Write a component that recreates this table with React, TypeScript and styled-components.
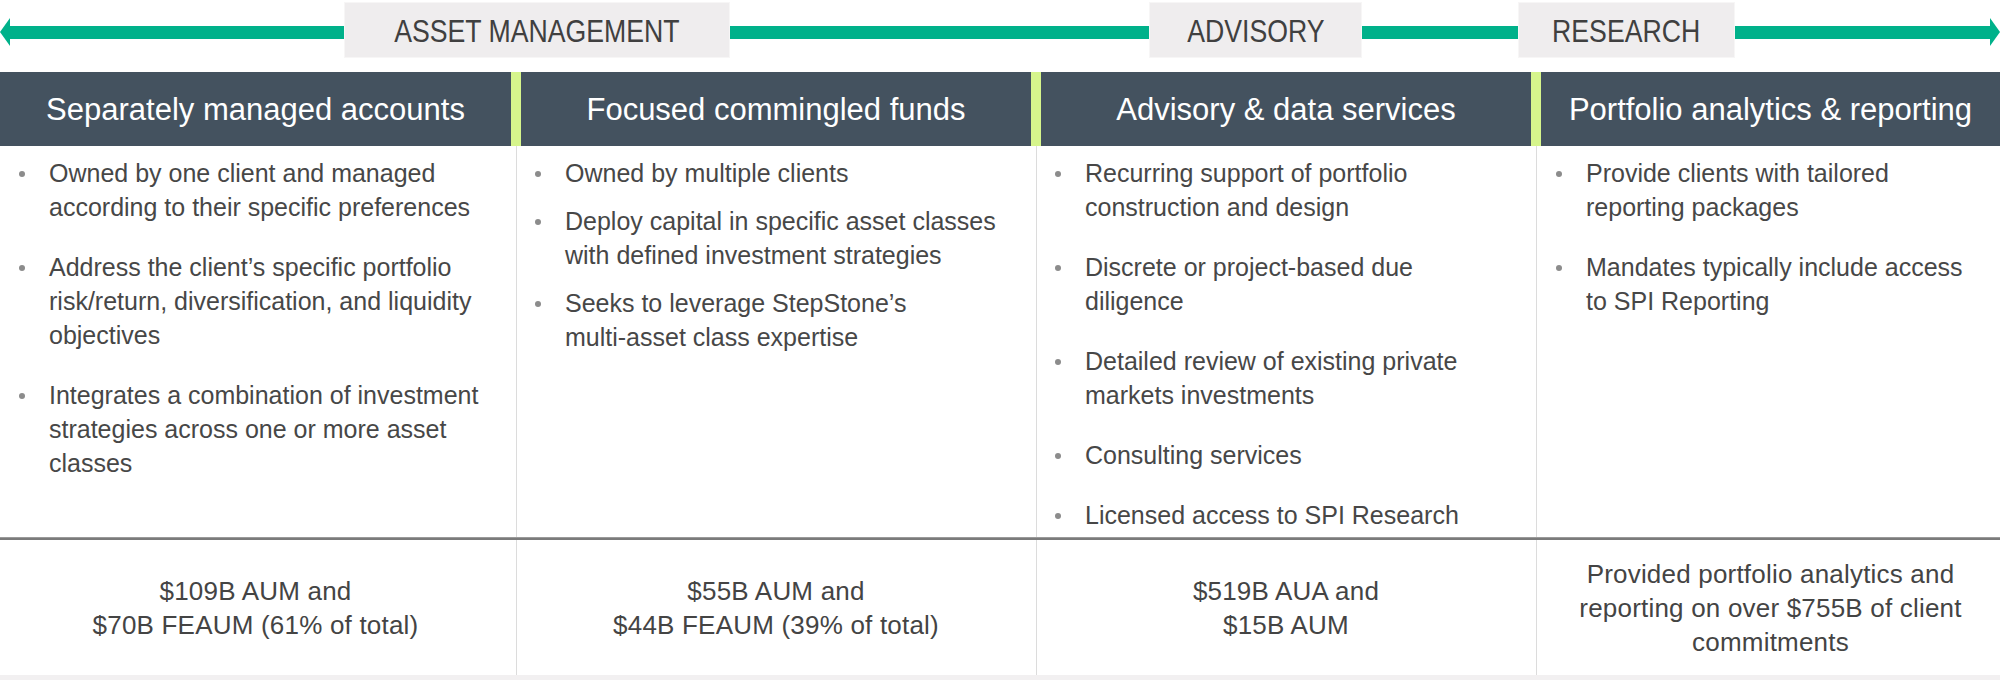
import styled, { createGlobalStyle } from 'styled-components';

const GlobalStyle = createGlobalStyle`
  html, body {
    margin: 0;
    padding: 0;
    background: #ffffff;
  }
  body {
    font-family: 'Liberation Sans', Arial, sans-serif;
    color: #444444;
  }
`;

const GREEN = '#00b18a';
const SLATE = '#44525f';
const LIME = '#d6f58c';

const Page = styled.div`
  width: 2000px;
  height: 680px;
  overflow: hidden;
`;

// top arrow with the three business labels
const ArrowBar = styled.div`
  display: flex;
  align-items: flex-start;
  height: 72px;
`;

const ArrowHead = styled.svg`
  display: block;
  flex: none;
  margin-top: 18px;
`;

const Line = styled.div<{ $w: number }>`
  flex: none;
  width: ${({ $w }) => $w}px;
  height: 13px;
  margin-top: 26px;
  background: ${GREEN};
`;

const Label = styled.div<{ $w: number }>`
  flex: none;
  box-sizing: border-box;
  width: ${({ $w }) => $w}px;
  height: 56px;
  margin-top: 2px;
  padding-top: 3px;
  border: 1px solid #f7f6f6;
  background: #efedee;
  display: flex;
  align-items: center;
  justify-content: center;
  font-size: 31px;
  color: #404040;
`;

// the label face is a condensed grotesque: squeeze the regular one
const LabelText = styled.span`
  display: inline-block;
  white-space: nowrap;
  transform: scaleX(0.86);
`;

const Table = styled.div`
  display: grid;
  grid-template-columns: 511px 10px 510px 10px 490px 10px 459px;
  grid-template-rows: 74px 391px 3px 135px 5px;
`;

const HeaderCell = styled.div`
  background: ${SLATE};
  color: #ffffff;
  font-size: 31px;
  display: flex;
  align-items: center;
  justify-content: center;
  white-space: nowrap;
  padding-top: 1px;
`;

const Separator = styled.div`
  background: ${LIME};
`;

const Divider = styled.div`
  display: flex;
  justify-content: center;
  &::before {
    content: '';
    width: 1px;
    background: #dcdcdc;
  }
`;

const BodyCell = styled.ul<{ $pad: number; $gap: number }>`
  list-style: none;
  margin: 0;
  padding: 10px 0 0 ${({ $pad }) => $pad}px;
  display: flex;
  flex-direction: column;
  gap: ${({ $gap }) => $gap}px;
`;

const Item = styled.li`
  display: flex;
  align-items: flex-start;
  font-size: 25px;
  line-height: 34px;
  color: #474747;
  white-space: nowrap;
`;

const Dot = styled.span`
  flex: none;
  width: 6px;
  height: 6px;
  border-radius: 50%;
  background: #8c8c8c;
  margin: 15px 24px 0 0;
`;

const Rule = styled.div`
  grid-column: 1 / -1;
  background: #7b7b7b;
  border-top: 1px solid #9a9a9a;
  box-sizing: border-box;
`;

const FooterCell = styled.div`
  display: flex;
  align-items: center;
  justify-content: center;
  text-align: center;
  font-size: 26px;
  line-height: 34px;
  color: #444444;
  letter-spacing: 0.2px;
`;

const Band = styled.div`
  grid-column: 1 / -1;
  background: #f2f0f1;
`;

interface Column {
  title: string;
  pad: number;
  gap: number;
  items: string[][];
  footer: string[];
}

const columns: Column[] = [
  {
    title: 'Separately managed accounts',
    pad: 19,
    gap: 26,
    items: [
      ['Owned by one client and managed', 'according to their specific preferences'],
      [
        'Address the client\u2019s specific portfolio',
        'risk/return, diversification, and liquidity',
        'objectives',
      ],
      ['Integrates a combination of investment', 'strategies across one or more asset', 'classes'],
    ],
    footer: ['$109B AUM and', '$70B FEAUM (61% of total)'],
  },
  {
    title: 'Focused commingled funds',
    pad: 14,
    gap: 14,
    items: [
      ['Owned by multiple clients'],
      ['Deploy capital in specific asset classes', 'with defined investment strategies'],
      ['Seeks to leverage StepStone\u2019s', 'multi-asset class expertise'],
    ],
    footer: ['$55B AUM and', '$44B FEAUM (39% of total)'],
  },
  {
    title: 'Advisory & data services',
    pad: 14,
    gap: 26,
    items: [
      ['Recurring support of portfolio', 'construction and design'],
      ['Discrete or project-based due', 'diligence'],
      ['Detailed review of existing private', 'markets investments'],
      ['Consulting services'],
      ['Licensed access to SPI Research'],
    ],
    footer: ['$519B AUA and', '$15B AUM'],
  },
  {
    title: 'Portfolio analytics & reporting',
    pad: 15,
    gap: 26,
    items: [
      ['Provide clients with tailored', 'reporting packages'],
      ['Mandates typically include access', 'to SPI Reporting'],
    ],
    footer: ['Provided portfolio analytics and', 'reporting on over $755B of client', 'commitments'],
  },
];

const lines = (parts: string[]) =>
  parts.map((p, i) => (
    <span key={i}>
      {i > 0 && <br />}
      {p}
    </span>
  ));

export default function App() {
  const between = (i: number, el: (k: string) => JSX.Element) =>
    i < columns.length - 1 ? el(`s${i}`) : null;

  return (
    <Page>
      <GlobalStyle />
      <ArrowBar>
        <ArrowHead width="10" height="28" viewBox="0 0 10 28">
          <polygon points="10,0 0,14 10,28" fill={GREEN} />
        </ArrowHead>
        <Line $w={334} />
        <Label $w={386}>
          <LabelText>ASSET MANAGEMENT</LabelText>
        </Label>
        <Line $w={419} />
        <Label $w={213}>
          <LabelText>ADVISORY</LabelText>
        </Label>
        <Line $w={156} />
        <Label $w={217}>
          <LabelText>RESEARCH</LabelText>
        </Label>
        <Line $w={255} />
        <ArrowHead width="10" height="28" viewBox="0 0 10 28">
          <polygon points="0,0 10,14 0,28" fill={GREEN} />
        </ArrowHead>
      </ArrowBar>
      <Table>
        {columns.map((c, i) => [
          <HeaderCell key={`h${i}`}>{c.title}</HeaderCell>,
          between(i, (k) => <Separator key={`h${k}`} />),
        ])}
        {columns.map((c, i) => [
          <BodyCell key={`b${i}`} $pad={c.pad} $gap={c.gap}>
            {c.items.map((it, j) => (
              <Item key={j}>
                <Dot />
                <div>{lines(it)}</div>
              </Item>
            ))}
          </BodyCell>,
          between(i, (k) => <Divider key={`b${k}`} />),
        ])}
        <Rule />
        {columns.map((c, i) => [
          <FooterCell key={`f${i}`}>
            <div>{lines(c.footer)}</div>
          </FooterCell>,
          between(i, (k) => <Divider key={`f${k}`} />),
        ])}
        <Band />
      </Table>
    </Page>
  );
}
